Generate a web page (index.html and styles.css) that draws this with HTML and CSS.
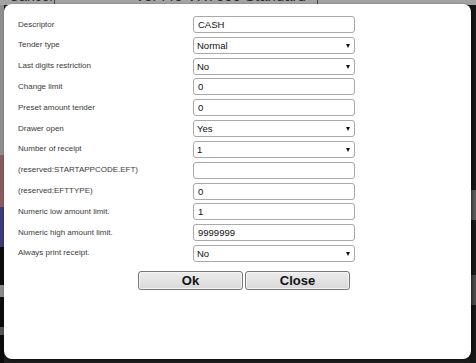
FILE: index.html
```html
<!DOCTYPE html>
<html>
<head>
<meta charset="utf-8">
<link rel="stylesheet" href="styles.css">
</head>
<body>
<div class="screen">
  <div class="topbar">
    <span class="cancel">Cancel</span>
    <span class="divider"></span>
    <span class="title">Ver440 VR7000 Standard 1</span>
    <span class="divider"></span>
  </div>
  <div class="middle">
    <div class="leftstrip">
      <span class="seg s-gray"></span>
      <span class="seg s-red"></span>
      <span class="seg s-blue"></span>
      <span class="seg s-black1"></span>
      <span class="seg s-lg"></span>
      <span class="seg s-black2"></span>
      <span class="seg s-lg2"></span>
      <span class="seg s-black3"></span>
    </div>
    <div class="rightstrip">
      <span class="seg r-a"></span>
      <span class="seg r-b"></span>
      <span class="seg r-c"></span>
      <span class="seg r-d"></span>
      <span class="seg r-e"></span>
    </div>
  </div>

  <div class="modal">
    <form class="form">
      <label class="lbl">Descriptor</label>
      <input class="field" type="text" value="CASH">

      <label class="lbl">Tender type</label>
      <span class="sel"><select class="field"><option>Normal</option></select></span>

      <label class="lbl">Last digits restriction</label>
      <span class="sel"><select class="field"><option>No</option></select></span>

      <label class="lbl">Change limit</label>
      <input class="field" type="text" value="0">

      <label class="lbl">Preset amount tender</label>
      <input class="field" type="text" value="0">

      <label class="lbl">Drawer open</label>
      <span class="sel"><select class="field"><option>Yes</option></select></span>

      <label class="lbl">Number of receipt</label>
      <span class="sel"><select class="field"><option>1</option></select></span>

      <label class="lbl">(reserved:STARTAPPCODE.EFT)</label>
      <input class="field" type="text" value="">

      <label class="lbl">(reserved:EFTTYPE)</label>
      <input class="field" type="text" value="0">

      <label class="lbl">Numeric low amount limit.</label>
      <input class="field" type="text" value="1">

      <label class="lbl">Numeric high amount limit.</label>
      <input class="field" type="text" value="9999999">

      <label class="lbl">Always print receipt.</label>
      <span class="sel"><select class="field"><option>No</option></select></span>
    </form>
    <div class="buttons">
      <button class="btn" type="button">Ok</button>
      <button class="btn" type="button">Close</button>
    </div>
  </div>
</div>
</body>
</html>
```

FILE: styles.css
```css
html, body {
  margin: 0;
  padding: 0;
}
body {
  width: 476px;
  height: 363px;
  overflow: hidden;
  background: #1c1c1c;
  font-family: "Liberation Sans", Arial, sans-serif;
}
.screen {
  position: relative;
  width: 476px;
  height: 363px;
  overflow: hidden;
  display: flex;
  flex-direction: column;
  background: #1e1e1e;
}
.topbar {
  height: 5px;
  flex: none;
  background: #a3a3a3;
  display: flex;
  align-items: flex-start;
  overflow: hidden;
  color: #2a2a2a;
}
.topbar .cancel {
  font-size: 14px;
  line-height: 14px;
  margin-top: -11px;
  margin-left: 9px;
  width: 45px;
}
.topbar .title {
  font-size: 15px;
  line-height: 15px;
  margin-top: -12px;
  margin-left: 80px;
  width: 182px;
}
.topbar .divider {
  width: 1px;
  height: 5px;
  background: #444;
}
.middle {
  flex: 1;
  display: flex;
  justify-content: space-between;
}
.leftstrip {
  width: 4px;
  display: flex;
  flex-direction: column;
}
.rightstrip {
  width: 6px;
  display: flex;
  flex-direction: column;
}
.seg { display: block; }
.s-gray { height: 150px; background: #8f8f8f; }
.s-red { height: 52px; background: #8a5c5c; }
.s-blue { height: 40px; background: #3b3b78; }
.s-black1 { height: 38px; background: #0c0c0c; }
.s-lg { height: 12px; background: #8a8a8a; }
.s-black2 { height: 30px; background: #0c0c0c; }
.s-lg2 { height: 8px; background: #555; }
.s-black3 { flex: 1; background: #0c0c0c; }
.r-a { height: 185px; background: #161616; }
.r-b { height: 30px; background: #5a5a5a; }
.r-c { height: 55px; background: #181818; }
.r-d { height: 30px; background: #4a4a4a; }
.r-e { flex: 1; background: #161616; }

.modal {
  position: absolute;
  left: 4px;
  top: 4px;
  width: 467px;
  height: 355px;
  box-sizing: border-box;
  background: #ffffff;
  border-radius: 8px;
  box-shadow: 1px 1px 3px rgba(0,0,0,0.6);
  padding: 12px 0 0 14px;
}
.form {
  margin: 0;
  display: grid;
  grid-template-columns: 175px 162px;
  grid-auto-rows: 17px;
  row-gap: 3.82px;
  align-items: center;
}
.lbl {
  font-size: 8px;
  color: #3a3a3a;
  line-height: 10px;
}
.field {
  display: block;
  box-sizing: border-box;
  width: 162px;
  height: 17px;
  margin: 0;
  padding: 0 0 0 4px;
  border: 1px solid #a9a9a9;
  border-radius: 3px;
  background: #fff;
  font-family: "Liberation Sans", Arial, sans-serif;
  font-size: 9.5px;
  color: #111;
  outline: none;
}
select.field {
  appearance: none;
  -webkit-appearance: none;
  padding-left: 3px;
}
.sel {
  position: relative;
  display: block;
  width: 162px;
  height: 17px;
}
.sel::after {
  content: "";
  position: absolute;
  right: 5px;
  top: 7px;
  border-left: 2.5px solid transparent;
  border-right: 2.5px solid transparent;
  border-top: 4px solid #111;
  pointer-events: none;
}
.buttons {
  display: flex;
  gap: 2px;
  margin-top: 9px;
  padding-left: 120px;
}
.btn {
  width: 105px;
  height: 19px;
  margin: 0;
  padding: 0;
  border: 1px solid #777;
  border-radius: 3px;
  background: linear-gradient(#ececec, #d9d9d9);
  box-shadow: inset 0 0 0 1px #f4f4f4;
  font-family: "Liberation Sans", Arial, sans-serif;
  font-weight: bold;
  font-size: 13px;
  line-height: 17px;
  color: #111;
}
```
